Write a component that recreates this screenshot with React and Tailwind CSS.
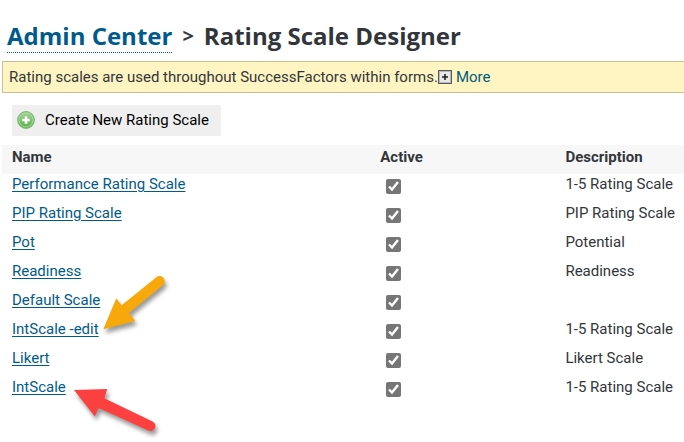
import React from "react";

const scales = [
  { name: "Performance Rating Scale", description: "1-5 Rating Scale" },
  { name: "PIP Rating Scale", description: "PIP Rating Scale" },
  { name: "Pot", description: "Potential" },
  { name: "Readiness", description: "Readiness" },
  { name: "Default Scale", description: "" },
  { name: "IntScale -edit", description: "1-5 Rating Scale", arrow: "orange" },
  { name: "Likert", description: "Likert Scale" },
  { name: "IntScale", description: "1-5 Rating Scale", arrow: "red" },
];

function OrangeArrow() {
  return (
    <svg
      className="absolute left-full -top-11 ml-1 pointer-events-none drop-shadow-[2px_4px_2px_rgba(0,0,0,0.4)]"
      width="64"
      height="56"
      viewBox="103 276 64 56"
      aria-hidden="true"
    >
      <path
        fill="#f7a90b"
        d="M103.3 330.3 116.3 299.3 121.6 306.2 156.3 278.2A5 5 0 0 1 162.8 286.2L129 314 135.3 322Z"
      />
    </svg>
  );
}

function RedArrow() {
  return (
    <svg
      className="absolute left-full top-3 ml-2 pointer-events-none drop-shadow-[2px_4px_2px_rgba(0,0,0,0.4)]"
      width="84"
      height="46"
      viewBox="74 390 84 46"
      aria-hidden="true"
    >
      <path
        fill="#fc4040"
        d="M74 391 107.3 390 104.3 399.3 152.6 422.4A5 5 0 0 1 148.3 431.5L98.7 409 94.7 417.3Z"
      />
    </svg>
  );
}

function AddIcon() {
  return (
    <svg width="18" height="18" viewBox="0 0 18 18" aria-hidden="true">
      <defs>
        <linearGradient id="addFill" x1="0" y1="0" x2="0" y2="1">
          <stop offset="0" stopColor="#a5d69a" />
          <stop offset="1" stopColor="#57b045" />
        </linearGradient>
      </defs>
      <circle cx="9" cy="9" r="8.4" fill="url(#addFill)" stroke="#78b56d" />
      <circle cx="9" cy="9" r="7" fill="none" stroke="#b3dcaa" strokeWidth="0.8" />
      <path d="M9 5.2v7.6M5.2 9h7.6" stroke="#fff" strokeWidth="2.6" />
    </svg>
  );
}

function ExpandIcon() {
  return (
    <svg width="14" height="14" viewBox="0 0 14 14" aria-hidden="true">
      <rect x="0.5" y="0.5" width="13" height="13" fill="#e8e8e8" stroke="#5a5a5a" />
      <rect x="1.5" y="1.5" width="11" height="11" fill="none" stroke="#b8b8b8" />
      <path d="M7 4v6M4 7h6" stroke="#222" strokeWidth="1.6" />
    </svg>
  );
}

export default function App() {
  return (
    <main className="min-h-screen overflow-hidden bg-white pl-0.5 pt-5 font-['Roboto',sans-serif] text-[15px] leading-5 text-[#32363a]">
      <h1 className="ml-[5px] flex h-[33px] gap-2.5 whitespace-nowrap font-['Open_Sans',sans-serif] text-[24px] font-bold leading-8">
        <a href="#admin" className="border-b border-dotted border-[#005b8c] text-[#005b8c]">
          Admin Center
        </a>
        <span className="text-[20px]">&gt;</span>
        <span>Rating Scale Designer</span>
      </h1>

      {/* Info banner */}
      <div className="mt-2 flex h-8 items-center border border-r-0 border-[#c8c090] bg-[#fff5c3] px-1.5">
        <span>Rating scales are used throughout SuccessFactors within forms.</span>
        <button className="flex items-center gap-1 text-[#005b7c]">
          <ExpandIcon />
          More
        </button>
      </div>

      <button className="ml-2.5 mt-3 flex h-[31px] items-center gap-2.5 bg-[#efefef] pb-px pl-[5px] pr-3 text-black">
        <AddIcon />
        Create New Rating Scale
      </button>

      {/* Rating scales */}
      <table className="mt-[9px] w-full table-fixed text-left">
        <thead>
          <tr className="h-[29px] bg-[#f7f7f7] align-top">
            <th className="w-[54%] pl-2.5 pt-0.5 font-bold">Name</th>
            <th className="w-[27%] pl-2.5 pt-0.5 font-bold">Active</th>
            <th className="pl-[11px] pt-0.5 font-bold">Description</th>
          </tr>
        </thead>
        <tbody>
          {scales.map((scale) => (
            <tr key={scale.name} className="h-[29px] whitespace-nowrap align-top">
              <td className="pl-2.5">
                <span className="relative inline-block">
                  <a href="#scale" className="text-[#005b8c] underline underline-offset-2">
                    {scale.name}
                  </a>
                  {scale.arrow === "orange" && <OrangeArrow />}
                  {scale.arrow === "red" && <RedArrow />}
                </span>
              </td>
              <td className="pl-4 pt-[5px]">
                <input
                  type="checkbox"
                  defaultChecked
                  aria-label={`${scale.name} active`}
                  className="block size-[15px] accent-[#767676]"
                />
              </td>
              <td className="pl-[11px]">{scale.description}</td>
            </tr>
          ))}
        </tbody>
      </table>
    </main>
  );
}
